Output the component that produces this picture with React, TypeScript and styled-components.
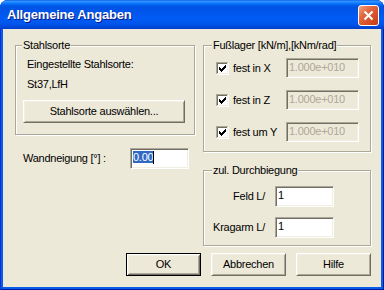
import React from "react";
import styled, { createGlobalStyle } from "styled-components";

const FACE = "#ECE9D8";
const LIGHT = "#F1EFE2";
const SHADOW = "#ACA899";
const DARK = "#716F64";
const FONT = `"Liberation Sans", Arial, sans-serif`;

const GlobalStyle = createGlobalStyle`
  html, body { margin: 0; padding: 0; background: #ffffff; }
  body { font-family: ${FONT}; font-size: 11px; color: #000; }
  * { box-sizing: border-box; }
`;

const Frame = styled.div`
  width: 384px;
  height: 290px;
  display: flex;
  flex-direction: column;
  border-radius: 8px 8px 0 0;
  overflow: hidden;
  background: #0A5BEA;
  box-shadow: inset 1px 0 0 #0831D9, inset -1px 0 0 #001DA0, inset 0 -1px 0 #001DA0;
`;

const TitleBar = styled.div`
  height: 29px;
  flex: none;
  display: flex;
  align-items: flex-start;
  background: linear-gradient(
    to bottom,
    #0058ee 0px,
    #3593ff 1px,
    #288eff 2px,
    #127dff 3px,
    #036ffc 4px,
    #0262ee 5px,
    #0057e5 6px,
    #0054e3 7px,
    #0055eb 12px,
    #005bf5 18px,
    #0055eb 24px,
    #0048d8 27px,
    #003dc8 29px
  );
`;

const TitleText = styled.div`
  flex: 1;
  padding: 1px 0 0 7px;
  font: bold 13px/28px ${FONT};
  letter-spacing: -0.2px;
  color: #ffffff;
  text-shadow: 1px 1px 0 #0a1883;
  white-space: nowrap;
`;

const CloseButton = styled.div`
  width: 21px;
  height: 21px;
  margin: 5px 5px 0 0;
  border: 1px solid #ffffff;
  border-radius: 3px;
  background: linear-gradient(135deg, #f3a486 0%, #e2683f 35%, #d24a22 75%, #c13d17 100%);
  display: flex;
  align-items: center;
  justify-content: center;
`;

const Client = styled.div`
  flex: 1;
  margin: 0 3px 3px;
  background: ${FACE};
  padding: 16px 10px 0 12px;
  display: flex;
  flex-direction: column;
  font-family: ${FONT};
  font-size: 11px;
  letter-spacing: -0.25px;
  line-height: 13px;
`;

const Columns = styled.div`
  display: flex;
  gap: 8px;
  align-items: flex-start;
`;

const Column = styled.div<{ $w: number }>`
  width: ${(p) => p.$w}px;
  display: flex;
  flex-direction: column;
`;

const GroupBox = styled.div<{ $pad: string; $mt?: number }>`
  position: relative;
  border: 1px solid ${SHADOW};
  box-shadow: inset 1px 1px 0 #ffffff, 1px 1px 0 #ffffff;
  padding: ${(p) => p.$pad};
  margin-top: ${(p) => p.$mt ?? 0}px;
`;

const Legend = styled.span<{ $x: number }>`
  position: absolute;
  top: -7px;
  left: ${(p) => p.$x}px;
  padding: 0 1px;
  background: ${FACE};
  line-height: 13px;
  white-space: nowrap;
`;

const Caption = styled.div<{ $mt?: number }>`
  padding-left: 4px;
  line-height: 13px;
  margin-top: ${(p) => p.$mt ?? 0}px;
  white-space: nowrap;
`;

const PushButton = styled.button<{ $w?: number; $default?: boolean; $mt?: number }>`
  appearance: none;
  display: block;
  width: ${(p) => (p.$w ? `${p.$w}px` : "100%")};
  height: 23px;
  margin: ${(p) => p.$mt ?? 0}px 0 0 0;
  padding: 0;
  border-radius: 0;
  outline: none;
  cursor: default;
  background: ${FACE};
  color: #000;
  font: 11px/13px ${FONT};
  letter-spacing: -0.25px;
  border: 1px solid;
  border-color: ${(p) => (p.$default ? "#000 #000 #000 #000" : `#ffffff ${DARK} ${DARK} #ffffff`)};
  box-shadow: ${(p) =>
    p.$default
      ? `inset 1px 1px 0 #ffffff, inset -1px -1px 0 ${DARK}, inset 2px 2px 0 ${LIGHT}, inset -2px -2px 0 ${SHADOW}`
      : `inset 1px 1px 0 ${LIGHT}, inset -1px -1px 0 ${SHADOW}`};
`;

const Edit = styled.div<{ $w: number; $h: number; $disabled?: boolean }>`
  width: ${(p) => p.$w}px;
  height: ${(p) => p.$h}px;
  border: 1px solid;
  border-color: ${SHADOW} #ffffff #ffffff ${SHADOW};
  box-shadow: inset 1px 1px 0 ${DARK}, inset -1px -1px 0 ${LIGHT};
  background: ${(p) => (p.$disabled ? FACE : "#ffffff")};
  color: ${(p) => (p.$disabled ? SHADOW : "#000")};
  padding: 2px 0 0 2px;
  line-height: 13px;
  white-space: nowrap;
  overflow: hidden;
`;

const Selection = styled.span`
  background: #316ac5;
  color: #ffffff;
`;

const Caret = styled.span`
  display: inline-block;
  width: 1px;
  height: 13px;
  background: #000;
  vertical-align: top;
`;

const FieldRow = styled.div`
  display: flex;
  align-items: center;
  margin-top: 13px;
  padding-left: 8px;
`;

const FieldLabel = styled.span<{ $w: number }>`
  width: ${(p) => p.$w}px;
  white-space: nowrap;
`;

const SupportRow = styled.div`
  display: grid;
  grid-template-columns: 13px 57px 73px;
  align-items: center;
  height: 20px;
  & + & {
    margin-top: 12px;
  }
`;

const CheckBox = styled.span`
  display: block;
  width: 13px;
  height: 13px;
  position: relative;
  svg {
    display: block;
  }
`;

const CheckLabel = styled.span`
  padding-left: 4px;
  white-space: nowrap;
`;

const LimitGrid = styled.div`
  display: grid;
  grid-template-columns: 52px 59px;
  column-gap: 10px;
  row-gap: 10px;
  align-items: center;
`;

const LimitLabel = styled.span`
  text-align: right;
  white-space: nowrap;
`;

const ButtonRow = styled.div`
  display: flex;
  justify-content: flex-end;
  gap: 10px;
  margin-top: 7px;
`;

function Check() {
  return (
    <CheckBox>
      <svg width="13" height="13" viewBox="0 0 13 13" shapeRendering="crispEdges">
        <rect x="0" y="0" width="13" height="13" fill="#ffffff" />
        <rect x="0" y="0" width="12" height="1" fill={SHADOW} />
        <rect x="0" y="0" width="1" height="12" fill={SHADOW} />
        <rect x="1" y="1" width="10" height="1" fill={DARK} />
        <rect x="1" y="1" width="1" height="10" fill={DARK} />
        <rect x="1" y="11" width="11" height="1" fill={LIGHT} />
        <rect x="11" y="1" width="1" height="11" fill={LIGHT} />
        <g fill="#000">
          <rect x="9" y="3" width="1" height="1" />
          <rect x="8" y="4" width="2" height="1" />
          <rect x="3" y="5" width="1" height="1" />
          <rect x="7" y="5" width="3" height="1" />
          <rect x="3" y="6" width="2" height="1" />
          <rect x="6" y="6" width="3" height="1" />
          <rect x="3" y="7" width="5" height="1" />
          <rect x="4" y="8" width="3" height="1" />
          <rect x="5" y="9" width="1" height="1" />
        </g>
      </svg>
    </CheckBox>
  );
}

const supports = ["fest in X", "fest in Z", "fest um Y"];

export default function App() {
  return (
    <>
      <GlobalStyle />
      <Frame>
        <TitleBar>
          <TitleText>Allgemeine Angaben</TitleText>
          <CloseButton>
            <svg width="19" height="19" viewBox="0 0 19 19">
              <path d="M5.5 5.5 L13.5 13.5 M13.5 5.5 L5.5 13.5" stroke="#ffffff" strokeWidth="2" />
            </svg>
          </CloseButton>
        </TitleBar>
        <Client>
          <Columns>
            <Column $w={180}>
              <GroupBox $pad="12px 9px 11px 7px">
                <Legend $x={6}>Stahlsorte</Legend>
                <Caption>Eingestellte Stahlsorte:</Caption>
                <Caption $mt={7}>St37,LfH</Caption>
                <PushButton $mt={9}>Stahlsorte auswählen...</PushButton>
              </GroupBox>
              <FieldRow>
                <FieldLabel $w={107}>Wandneigung [°] :</FieldLabel>
                <Edit $w={59} $h={21}>
                  <Selection>0.00</Selection>
                  <Caret />
                </Edit>
              </FieldRow>
            </Column>
            <Column $w={168}>
              <GroupBox $pad="12px 0 9px 12px">
                <Legend $x={8}>Fußlager [kN/m],[kNm/rad]</Legend>
                {supports.map((s) => (
                  <SupportRow key={s}>
                    <Check />
                    <CheckLabel>{s}</CheckLabel>
                    <Edit $w={73} $h={20} $disabled>
                      1.000e+010
                    </Edit>
                  </SupportRow>
                ))}
              </GroupBox>
              <GroupBox $pad="15px 0 7px 9px" $mt={18}>
                <Legend $x={8}>zul. Durchbiegung</Legend>
                <LimitGrid>
                  <LimitLabel>Feld L/</LimitLabel>
                  <Edit $w={59} $h={21}>1</Edit>
                  <LimitLabel>Kragarm L/</LimitLabel>
                  <Edit $w={59} $h={21}>1</Edit>
                </LimitGrid>
              </GroupBox>
            </Column>
          </Columns>
          <ButtonRow>
            <PushButton $w={75} $default>
              OK
            </PushButton>
            <PushButton $w={75}>Abbrechen</PushButton>
            <PushButton $w={75}>Hilfe</PushButton>
          </ButtonRow>
        </Client>
      </Frame>
    </>
  );
}
